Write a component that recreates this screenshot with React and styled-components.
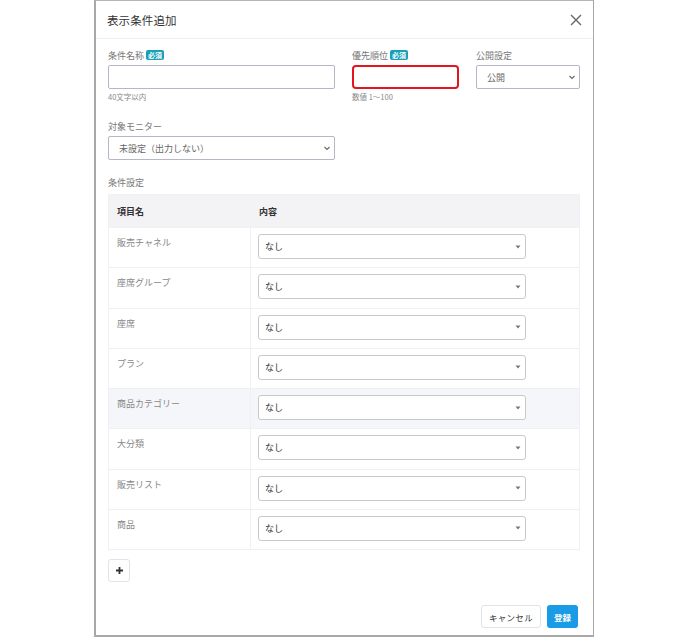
import React from 'react'
import styled, { createGlobalStyle } from 'styled-components'

const GlobalStyle = createGlobalStyle`
  html, body {
    margin: 0;
    padding: 0;
    background: #ffffff;
  }
  body {
    font-family: "Noto Sans CJK JP", "Noto Sans", sans-serif;
    color: #333;
  }
`

const rows = [
  { name: '販売チャネル' },
  { name: '座席グループ' },
  { name: '座席' },
  { name: 'プラン' },
  { name: '商品カテゴリー', active: true },
  { name: '大分類' },
  { name: '販売リスト' },
  { name: '商品' },
]

const Chevron = () => (
  <svg width="8" height="8" viewBox="0 0 8 8">
    <path d="M1.5 3 L4 5.5 L6.5 3" fill="none" stroke="#666" strokeWidth="1.1" />
  </svg>
)

const Caret = () => (
  <svg width="6" height="4" viewBox="0 0 6 4">
    <path d="M0.5 0.5 L5.5 0.5 L3 3.5 Z" fill="#777" />
  </svg>
)

const App = () => {
  return (
    <Page>
      <GlobalStyle />
      <Modal>
        <Header>
          <Title>表示条件追加</Title>
          <CloseButton>
            <svg width="12" height="12" viewBox="0 0 12 12">
              <path d="M1 1 L11 11 M11 1 L1 11" stroke="#666" strokeWidth="1.4" />
            </svg>
          </CloseButton>
        </Header>
        <Body>
          <FieldRow>
            <Field $width={227}>
              <Label>条件名称<Badge>必須</Badge></Label>
              <TextInput />
              <Help>40文字以内</Help>
            </Field>
            <Field $width={107} $ml={17}>
              <Label>優先順位<Badge>必須</Badge></Label>
              <TextInput $error />
              <Help>数値 1〜100</Help>
            </Field>
            <Field $width={104} $ml={17}>
              <Label>公開設定</Label>
              <SelectBox>
                <span>公開</span>
                <Chevron />
              </SelectBox>
            </Field>
          </FieldRow>

          <Field $width={227} $mt={17}>
            <Label>対象モニター</Label>
            <SelectBox>
              <span>未設定（出力しない）</span>
              <Chevron />
            </SelectBox>
          </Field>

          <SectionLabel>条件設定</SectionLabel>
          <Table>
            <HeadRow>
              <HeadCell>項目名</HeadCell>
              <HeadCell $content>内容</HeadCell>
            </HeadRow>
            {rows.map((r) => (
              <Row key={r.name} $active={r.active}>
                <NameCell>{r.name}</NameCell>
                <ContentCell>
                  <RowSelect>
                    <span>なし</span>
                    <Caret />
                  </RowSelect>
                </ContentCell>
              </Row>
            ))}
          </Table>

          <AddButton>
            <svg width="9" height="9" viewBox="0 0 9 9">
              <path d="M4.5 1 V8 M1 4.5 H8" stroke="#333" strokeWidth="1.8" />
            </svg>
          </AddButton>

          <Footer>
            <CancelButton>キャンセル</CancelButton>
            <SubmitButton>登録</SubmitButton>
          </Footer>
        </Body>
      </Modal>
    </Page>
  )
}

export default App

const Page = styled.div`
  width: 688px;
  height: 637px;
  display: flex;
  justify-content: center;
  overflow: hidden;
`
const Modal = styled.div`
  width: 500px;
  height: 637px;
  box-sizing: border-box;
  border: 1px solid #a8a8a8;
  border-top: 1px solid #b5b5b5;
  border-left: 2px solid #a8a8a8;
  border-bottom: 2px solid #a8a8a8;
  background: #fff;
  display: flex;
  flex-direction: column;
`
const Header = styled.div`
  height: 38px;
  box-sizing: border-box;
  border-bottom: 1px solid #eceef2;
  display: flex;
  align-items: center;
  justify-content: space-between;
  padding: 0 11px 0 11px;
`
const Title = styled.h1`
  margin: 0;
  font-size: 11.5px;
  font-weight: 400;
  color: #333;
  letter-spacing: 0.1px;
`
const CloseButton = styled.div`
  display: flex;
  align-items: center;
`
const Body = styled.div`
  flex: 1;
  display: flex;
  flex-direction: column;
  padding: 9px 12px 7px 12px;
`
const FieldRow = styled.div`
  display: flex;
  align-items: flex-start;
`
const Field = styled.div`
  width: ${(p) => p.$width}px;
  margin-left: ${(p) => p.$ml || 0}px;
  margin-top: ${(p) => p.$mt || 0}px;
  display: flex;
  flex-direction: column;
`
const Label = styled.div`
  height: 14px;
  display: flex;
  align-items: center;
  font-size: 9px;
  color: #777;
  margin-bottom: 3px;
`
const Badge = styled.span`
  margin-left: 2px;
  background: #199fb6;
  color: #fff;
  font-size: 7px;
  font-weight: 700;
  line-height: 10px;
  padding: 0 2px;
  border-radius: 2px;
`
const TextInput = styled.div`
  height: 24px;
  box-sizing: border-box;
  border: ${(p) => (p.$error ? '2px solid #e3151e' : '1px solid #b4b7c6')};
  border-radius: ${(p) => (p.$error ? '4px' : '2px')};
  background: #fff;
`
const Help = styled.div`
  margin-top: 3px;
  font-size: 7.5px;
  color: #888;
  line-height: 10px;
`
const SelectBox = styled.div`
  height: 24px;
  box-sizing: border-box;
  border: 1px solid #b4b7c6;
  border-radius: 2px;
  display: flex;
  align-items: center;
  justify-content: space-between;
  padding: 0 3px 0 10px;
  font-size: 9px;
  color: #666;
`
const SectionLabel = styled.div`
  margin-top: 16px;
  height: 14px;
  line-height: 14px;
  font-size: 9px;
  color: #777;
  margin-bottom: 4px;
`
const Table = styled.div`
  width: 472px;
  box-sizing: border-box;
  border: 1px solid #eef0f4;
  display: flex;
  flex-direction: column;
`
const HeadRow = styled.div`
  height: 32px;
  background: #f3f3f5;
  display: flex;
  align-items: center;
`
const HeadCell = styled.div`
  width: ${(p) => (p.$content ? 'auto' : '142px')};
  box-sizing: border-box;
  padding-left: 8px;
  font-size: 9px;
  font-weight: 700;
  color: #333;
`
const Row = styled.div`
  height: 40.25px;
  box-sizing: border-box;
  border-top: 1px solid #eef0f4;
  background: ${(p) => (p.$active ? '#f5f6fa' : '#fff')};
  display: flex;
`
const NameCell = styled.div`
  width: 142px;
  box-sizing: border-box;
  border-right: 1px solid #eef0f4;
  padding: 8px 0 0 8px;
  font-size: 9px;
  color: #888;
`
const ContentCell = styled.div`
  flex: 1;
  padding: 6px 0 0 7px;
`
const RowSelect = styled.div`
  width: 268px;
  height: 25px;
  box-sizing: border-box;
  border: 1px solid #c9c9c9;
  border-radius: 3px;
  background: #fff;
  display: flex;
  align-items: center;
  justify-content: space-between;
  padding: 0 4px 0 6px;
  font-size: 9px;
  color: #333;
`
const AddButton = styled.div`
  margin-top: 9px;
  width: 22px;
  height: 23px;
  box-sizing: border-box;
  border: 1px solid #dfe3ec;
  border-radius: 3px;
  display: flex;
  align-items: center;
  justify-content: center;
`
const Footer = styled.div`
  margin-top: auto;
  display: flex;
  justify-content: flex-end;
  gap: 6px;
  padding-right: 3px;
`
const CancelButton = styled.div`
  height: 23px;
  box-sizing: border-box;
  border: 1px solid #dfe3ec;
  border-radius: 3px;
  padding: 0 7px;
  display: flex;
  align-items: center;
  font-size: 8.5px;
  color: #333;
  letter-spacing: 0.3px;
`
const SubmitButton = styled.div`
  height: 23px;
  box-sizing: border-box;
  border-radius: 3px;
  padding: 0 7px;
  background: #1a9be6;
  display: flex;
  align-items: center;
  font-size: 8.5px;
  font-weight: 700;
  color: #fff;
`
